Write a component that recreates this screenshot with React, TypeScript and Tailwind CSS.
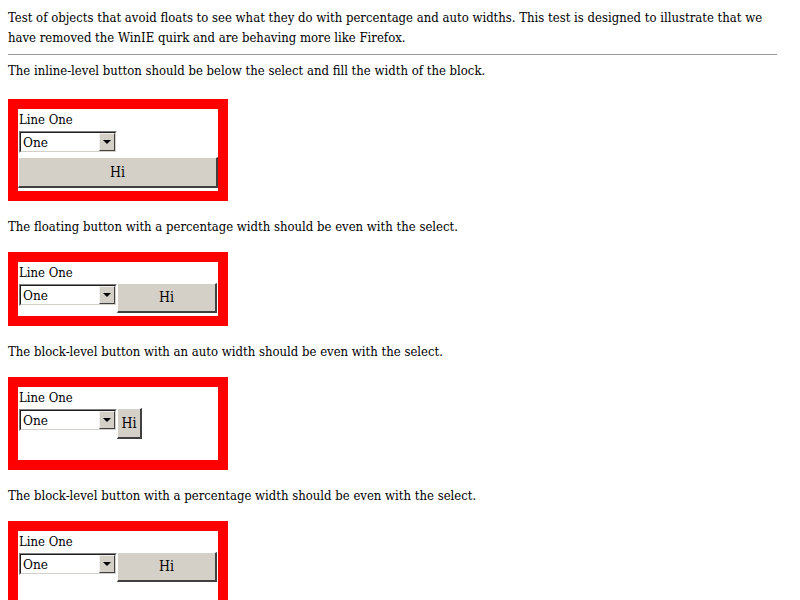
import React from "react";

const font = "font-['DejaVu_Serif',serif] [font-stretch:condensed] text-[13px]";

function Select() {
  return (
    <div className="flex w-[98px] h-[22px] border-t border-l border-t-[#808080] border-l-[#808080] border-b border-r border-b-white border-r-white bg-white">
      <div className="flex flex-1 border-t border-l border-t-[#202020] border-l-[#202020] border-b border-r border-b-[#d4d0c8] border-r-[#d4d0c8]">
        <div className="flex-1 pl-[2px] leading-[19px] text-[13.5px] text-black">One</div>
        <div className="w-[16px] h-[18px] bg-[#d4d0c8] border-t border-l border-t-[#f0f0f0] border-l-[#f0f0f0] border-b border-r border-b-[#404040] border-r-[#404040] flex items-center justify-center">
          <div className="w-0 h-0 border-l-[4px] border-r-[4px] border-t-[4px] border-l-transparent border-r-transparent border-t-black" />
        </div>
      </div>
    </div>
  );
}

function Btn({ className }: { className: string }) {
  return (
    <div
      className={
        "flex items-center justify-center bg-[#d4d0c8] border-t border-l border-t-white border-l-white border-b-2 border-r-2 border-b-[#404040] border-r-[#404040] text-[14px] " +
        className
      }
    >
      Hi
    </div>
  );
}

function Box({ children }: { children: React.ReactNode }) {
  return (
    <div className="w-[220px] border-[10px] border-[#ff0000] bg-white">
      <div className="h-[21px] leading-[21px] pl-[1px]">Line One</div>
      {children}
    </div>
  );
}

function P({ children, className = "" }: { children: React.ReactNode; className?: string }) {
  return <p className={"leading-[19px] text-black " + className}>{children}</p>;
}

export default function App() {
  return (
    <div className="bg-white w-[800px] h-[600px] overflow-hidden">
      <div className={"w-[785px] px-[8px] pt-[8px] " + font}>
        <p className="leading-[20px] text-black">
          Test of objects that avoid floats to see what they do with percentage and auto widths. This test is designed
          to illustrate that we have removed the WinIE quirk and are behaving more like Firefox.
        </p>
        <div className="mt-[6px] border-t border-[#999999] h-[2px]" />
        <p className="mt-[5px] leading-[20px]">
          The inline-level button should be below the select and fill the width of the block.
        </p>
        <div className="mt-[18px]">
          <Box>
            <div className="pl-[1px] pt-[1px]">
              <Select />
            </div>
            <Btn className="mt-[4px] w-[200px] h-[31px]" />
            <div className="h-[3px]" />
          </Box>
        </div>
        <P className="my-[16px]">The floating button with a percentage width should be even with the select.</P>
        <Box>
          <div className="flex items-start">
            <div className="pl-[1px] pt-[1px]">
              <Select />
            </div>
            <Btn className="w-[100px] h-[30px]" />
          </div>
          <div className="h-[3px]" />
        </Box>
        <P className="my-[16px]">The block-level button with an auto width should be even with the select.</P>
        <Box>
          <div className="flex items-start">
            <div className="pl-[1px] pt-[1px]">
              <Select />
            </div>
            <Btn className="w-[25px] h-[31px]" />
          </div>
          <div className="h-[21px]" />
        </Box>
        <P className="my-[16px]">The block-level button with a percentage width should be even with the select.</P>
        <Box>
          <div className="flex items-start">
            <div className="pl-[1px] pt-[1px]">
              <Select />
            </div>
            <Btn className="w-[100px] h-[30px]" />
          </div>
          <div className="h-[40px]" />
        </Box>
      </div>
    </div>
  );
}
